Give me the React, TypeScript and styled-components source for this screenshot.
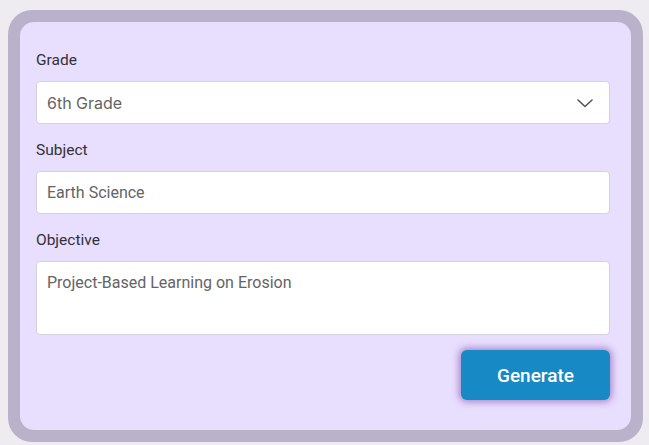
import React from "react";
import styled, { createGlobalStyle } from "styled-components";

const Global = createGlobalStyle`
  html, body { margin: 0; padding: 0; background: #eeecf0; }
  body { font-family: Roboto, "Noto Sans", sans-serif; }
  * { box-sizing: border-box; }
`;

const Frame = styled.div`
  margin: 10px 6px 4px 8px;
  padding: 12px;
  background: #bab2cb;
  border-radius: 24px;
`;

const Panel = styled.div`
  background: #e8defd;
  border-radius: 14px;
  padding: 27px 21px 30px 16px;
  display: flex;
  flex-direction: column;
`;

const Group = styled.div`
  display: flex;
  flex-direction: column;
  margin-bottom: 15px;
`;

const Label = styled.label`
  font-size: 15.5px;
  line-height: 22px;
  color: #333038;
  margin-bottom: 10px;
`;

const Field = styled.div<{ $tall?: boolean; $select?: boolean }>`
  height: ${(p) => (p.$tall ? 74 : 43)}px;
  background: #fff;
  border: 1px solid #d6d1dd;
  border-radius: 4px;
  padding: ${(p) => (p.$tall ? "11px 10px" : "0 10px")};
  display: flex;
  align-items: ${(p) => (p.$tall ? "flex-start" : "center")};
  justify-content: space-between;
  font-family: ${(p) => (p.$select ? "Inter, Roboto, sans-serif" : "Roboto, sans-serif")};
  font-size: 16px;
  line-height: 20px;
  color: #646464;
`;

const Chevron = styled.svg`
  width: 18px;
  height: 18px;
  margin-right: 5px;
`;

const Actions = styled.div`
  display: flex;
  justify-content: flex-end;
`;

const Button = styled.button`
  width: 149px;
  height: 50px;
  border: none;
  border-radius: 6px;
  background: #1789c4;
  color: #fff;
  font-family: Roboto, "Noto Sans", sans-serif;
  font-size: 19px;
  font-weight: 500;
  box-shadow: 0 0 7px 2px rgba(110, 60, 160, 0.55);
  cursor: pointer;
`;

export default function App() {
  return (
    <>
      <Global />
      <Frame>
        <Panel>
          <Group>
            <Label>Grade</Label>
            <Field $select>
              <span>6th Grade</span>
              <Chevron viewBox="0 0 18 18" fill="none">
                <path d="M2 6 L9 12.5 L16 6" stroke="#555" strokeWidth="1.6" strokeLinecap="round" strokeLinejoin="round" />
              </Chevron>
            </Field>
          </Group>
          <Group>
            <Label>Subject</Label>
            <Field>
              <span>Earth Science</span>
            </Field>
          </Group>
          <Group>
            <Label>Objective</Label>
            <Field $tall>
              <span>Project-Based Learning on Erosion</span>
            </Field>
          </Group>
          <Actions>
            <Button>Generate</Button>
          </Actions>
        </Panel>
      </Frame>
    </>
  );
}
